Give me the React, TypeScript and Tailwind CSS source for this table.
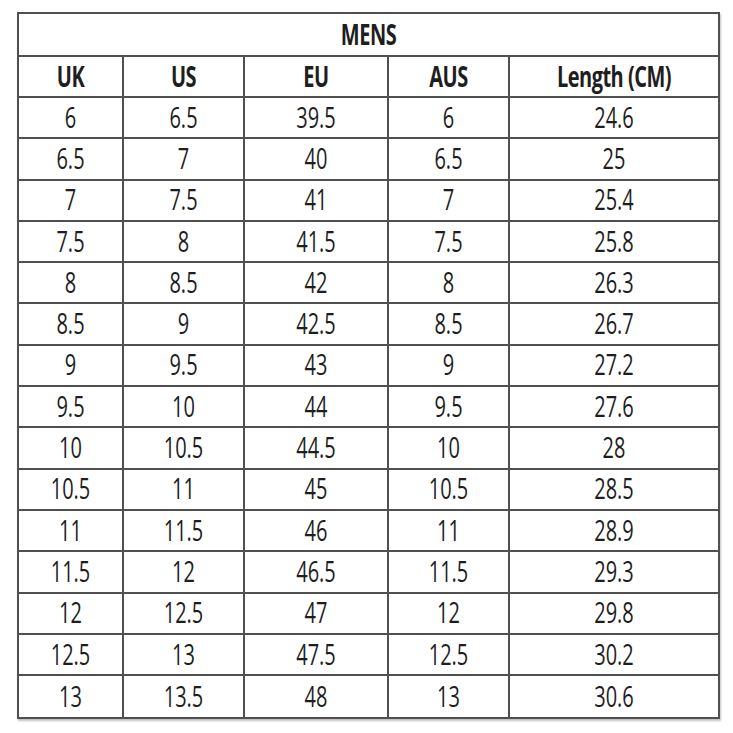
const cols = ["UK", "US", "EU", "AUS", "Length (CM)"];
const widths = ["w-[105px]", "w-[121px]", "w-[144px]", "w-[121px]", "flex-1"];

const rows: string[][] = [
  ["6", "6.5", "39.5", "6", "24.6"],
  ["6.5", "7", "40", "6.5", "25"],
  ["7", "7.5", "41", "7", "25.4"],
  ["7.5", "8", "41.5", "7.5", "25.8"],
  ["8", "8.5", "42", "8", "26.3"],
  ["8.5", "9", "42.5", "8.5", "26.7"],
  ["9", "9.5", "43", "9", "27.2"],
  ["9.5", "10", "44", "9.5", "27.6"],
  ["10", "10.5", "44.5", "10", "28"],
  ["10.5", "11", "45", "10.5", "28.5"],
  ["11", "11.5", "46", "11", "28.9"],
  ["11.5", "12", "46.5", "11.5", "29.3"],
  ["12", "12.5", "47", "12", "29.8"],
  ["12.5", "13", "47.5", "12.5", "30.2"],
  ["13", "13.5", "48", "13", "30.6"],
];

function Cell({ text, i, bold }: { text: string; i: number; bold?: boolean }) {
  return (
    <div
      className={`${widths[i]} flex items-center justify-center ${
        i < 4 ? "border-r-2 border-[#505050]" : ""
      }`}
    >
      <span
        className={`inline-block scale-y-[1.45] text-[20px] leading-none text-[#1e1e1e] ${
          bold ? "font-bold tracking-[-0.5px]" : ""
        }`}
      >
        {text}
      </span>
    </div>
  );
}

export default function App() {
  return (
    <div
      className="w-[733px] h-[733px] bg-white pt-[12px] pl-[17px]"
      style={{ fontFamily: "'Open Sans', 'Liberation Sans', sans-serif" }}
    >
      <div className="w-[703px] border-2 border-[#505050] shadow-[1px_2px_2px_rgba(0,0,0,0.25)]">
        <div className="h-[43px] flex items-center justify-center border-b-2 border-[#505050]">
          <span className="inline-block scale-y-[1.45] text-[20px] leading-none font-bold tracking-[-0.5px] text-[#1e1e1e]">
            MENS
          </span>
        </div>
        <div className="h-[41px] flex border-b-2 border-[#505050]">
          {cols.map((c, i) => (
            <Cell key={c} text={c} i={i} bold />
          ))}
        </div>
        {rows.map((r, ri) => (
          <div
            key={ri}
            className={`h-[41.3px] flex ${
              ri < rows.length - 1 ? "border-b-2 border-[#505050]" : ""
            }`}
          >
            {r.map((v, i) => (
              <Cell key={i} text={v} i={i} />
            ))}
          </div>
        ))}
      </div>
    </div>
  );
}
